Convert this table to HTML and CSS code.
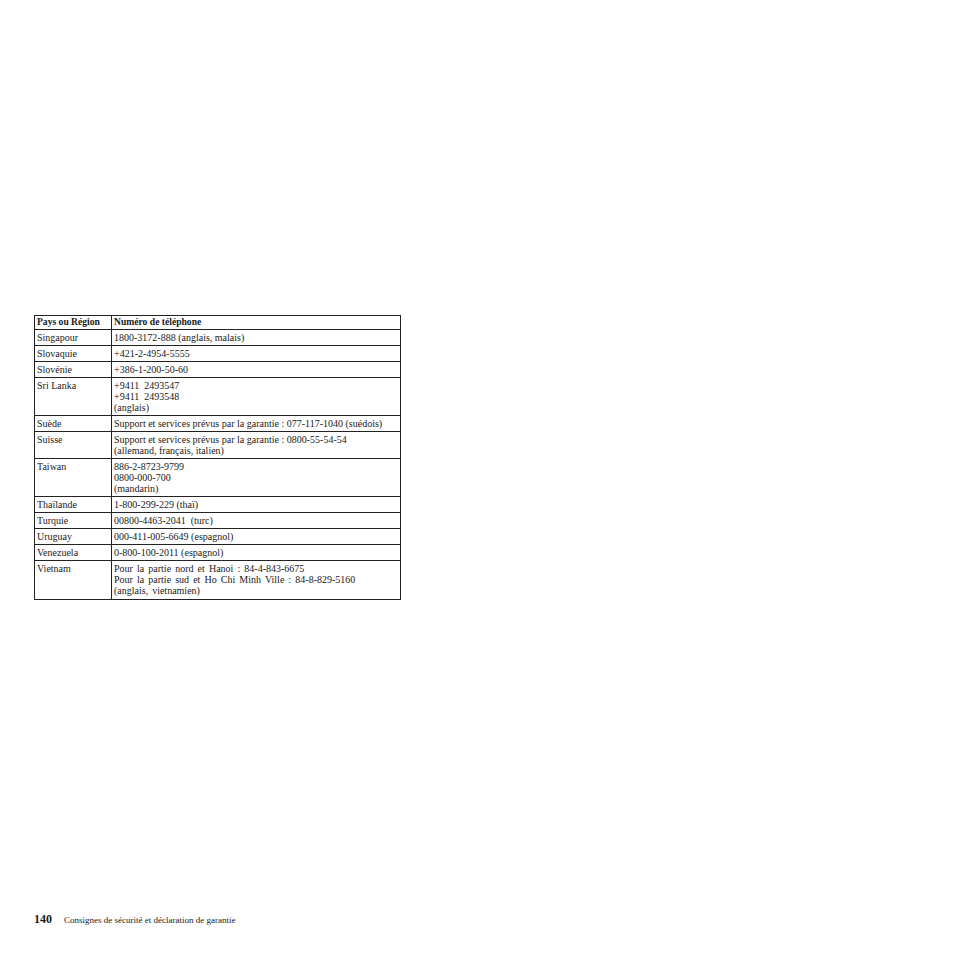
FILE: index.html
```html
<!DOCTYPE html>
<html>
<head>
<meta charset="utf-8">
<link rel="stylesheet" href="styles.css">
</head>
<body>
<div class="page">
  <table class="phones">
    <colgroup><col class="c1"><col class="c2"></colgroup>
    <thead>
      <tr><th>Pays ou Région</th><th>Numéro de téléphone</th></tr>
    </thead>
    <tbody>
      <tr><td>Singapour</td><td>1800-3172-888 (anglais, malais)</td></tr>
      <tr><td>Slovaquie</td><td>+421-2-4954-5555</td></tr>
      <tr><td>Slovénie</td><td>+386-1-200-50-60</td></tr>
      <tr><td>Sri Lanka</td><td>+9411&nbsp; 2493547<br>+9411&nbsp; 2493548<br>(anglais)</td></tr>
      <tr><td>Suède</td><td>Support et services prévus par la garantie : 077-117-1040 (suédois)</td></tr>
      <tr><td>Suisse</td><td>Support et services prévus par la garantie : 0800-55-54-54<br>(allemand, français, italien)</td></tr>
      <tr><td>Taiwan</td><td>886-2-8723-9799<br>0800-000-700<br>(mandarin)</td></tr>
      <tr><td>Thaïlande</td><td>1-800-299-229 (thaï)</td></tr>
      <tr><td>Turquie</td><td>00800-4463-2041&nbsp; (turc)</td></tr>
      <tr><td>Uruguay</td><td>000-411-005-6649 (espagnol)</td></tr>
      <tr><td>Venezuela</td><td>0-800-100-2011 (espagnol)</td></tr>
      <tr class="last"><td>Vietnam</td><td><span class="wide">Pour la partie nord et Hanoi : 84-4-843-6675</span><br><span class="wide">Pour la partie sud et Ho Chi Minh Ville : 84-8-829-5160</span><br><span class="wide2">(anglais, vietnamien)</span></td></tr>
    </tbody>
  </table>
  <div class="footer">
    <span class="num">140</span>
    <span class="title">Consignes de sécurité et déclaration de garantie</span>
  </div>
</div>
</body>
</html>
```
FILE: styles.css
```css
html, body {
  margin: 0;
  padding: 0;
  background: #fff;
}
body {
  font-family: "Liberation Serif", "DejaVu Serif", serif;
  color: #1a1a1a;
}
.page {
  width: 954px;
  height: 954px;
  padding: 315px 0 0 34px;
  box-sizing: border-box;
}
.phones {
  border-collapse: collapse;
  width: 367px;
  table-layout: fixed;
  font-size: 10px;
  line-height: 11px;
}
.c1 { width: 77px; }
.phones th, .phones td {
  border: 1px solid #222;
  padding: 2px 2px 2px 2px;
  text-align: left;
  vertical-align: top;
  white-space: nowrap;
  overflow: hidden;
}
.phones th {
  font-weight: bold;
  font-size: 9.6px;
  padding-top: 0;
  padding-bottom: 2px;
}
.phones .last td {
  padding-bottom: 3px;
}
.wide { word-spacing: 1.6px; }
.wide2 { word-spacing: 1.5px; }
.footer {
  margin-top: 312px;
  display: flex;
  align-items: baseline;
}
.num {
  font-weight: bold;
  font-size: 12px;
  width: 30px;
}
.title {
  font-size: 9px;
}
```
